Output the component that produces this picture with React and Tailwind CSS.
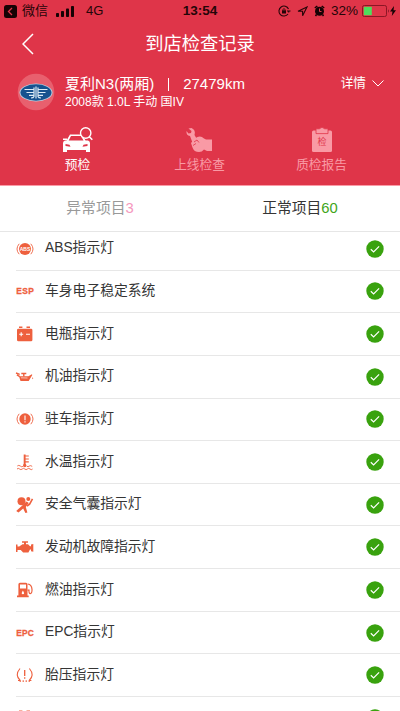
import React from 'react';

const CheckBadge = () => (
  <svg viewBox="0 0 18 18" className="h-[18px] w-[18px] shrink-0">
    <circle cx="9" cy="9" r="8.7" fill="#39a20e" />
    <path d="M4.8 9.2l2.8 2.7 5.5-5.6" fill="none" stroke="#fff" strokeWidth="1.2" />
  </svg>
);

const Glyph = ({ children }) => (
  <svg viewBox="0 0 18 18" className="h-[18px] w-[18px] shrink-0 overflow-visible" fill="#ee603e">
    {children}
  </svg>
);

const BrakeArcs = () => (
  <path
    d="M3.2 3.8Q-1.2 9 3.2 14.2M14.8 3.8Q19.2 9 14.8 14.2"
    fill="none"
    stroke="#ee603e"
    strokeWidth="0.9"
  />
);

const AbsIcon = () => (
  <Glyph>
    <BrakeArcs />
    <circle cx="9" cy="9" r="6" />
    <text x="9" y="10.9" textAnchor="middle" fontSize="5" fontWeight="700" fill="#fff">ABS</text>
  </Glyph>
);

const LetterIcon = ({ text }) => (
  <Glyph>
    <text x="9" y="12.2" textAnchor="middle" fontSize="8.4" fontWeight="700" textLength="17.6" stroke="#ee603e" strokeWidth="0.3">
      {text}
    </text>
  </Glyph>
);

const BatteryIcon = () => (
  <Glyph>
    <rect x="1" y="3.7" width="15.4" height="12.6" rx="1.4" />
    <path d="M3 1.5h3.4v1.4H3zM10.5 1.5H14v1.4h-3.500z" />
    <path d="M3.2 9.3h4M5.200 7.300v4M10 9.300h4" stroke="#fff" strokeWidth="1.1" />
  </Glyph>
);

const OilIcon = () => (
  <Glyph>
    <path d="M3 8.200h9.400l3.500-2 .4.9-3.600 5.800H4.500z" />
    <path d="M0 5l3.700 1.400M3.800 8.600L.9 6.800M5.300 5.500h5M7.800 5.500v3" fill="none" stroke="#ee603e" strokeWidth="1.400" />
    <path d="M16.700 9q1 1.700 0 2.200-1-.5 0-2.200z" />
    <path d="M5 9.800l6.500.2" stroke="#fff" strokeWidth=".6" />
  </Glyph>
);

const ParkingIcon = () => (
  <Glyph>
    <BrakeArcs />
    <circle cx="9" cy="9" r="5.700" />
    <path d="M9 5.500v4.800M9 11.200v1.300" stroke="#fff" strokeWidth="1.100" />
  </Glyph>
);

const WaterIcon = () => (
  <Glyph>
    <path d="M7.700 1.500h1.900v11H7.700zM9.500 2.400h3.300v1.100H9.500zM9.500 5.400h3.300v1.100H9.500zM9.500 8.300h3.300v1.100H9.500z" />
    <circle cx="8.700" cy="12.500" r="1.700" />
    <path
      d="M1.300 13q1.500-1.300 3 0t2.600.4M10.800 13.300q1.300.8 2.400-.2t3 .2M1 16q1.300-1.300 2.600 0t2.600 0 2.600 0 2.600 0 2.600 0 2.600 0"
      fill="none"
      stroke="#ee603e"
      strokeWidth=".9"
    />
  </Glyph>
);

const AirbagIcon = () => (
  <Glyph>
    <circle cx="5.500" cy="5.300" r="4" />
    <circle cx="12.300" cy="3" r="2" />
    <path d="M16.500 2.800l-2.900 5.300-2.600 2" fill="none" stroke="#ee603e" strokeWidth="1.600" />
    <path d="M10.500 5.500l2.300 1.600-3 4 1.600 5.400-2 .6-2.200-4.700-4.700 4.100-2.300-1.600 5.600-5z" />
  </Glyph>
);

const EngineIcon = () => (
  <Glyph>
    <path d="M6 3.300h6v1.400h-2v1.600h2l2 2h1V6.500l2.300-.4v7.600l-2.300-.4v-1.800h-1l-1.600 3H7.100l-2.300-2.600H1.500v2.200H0V6.600h1.500v2h1.700l3.300-2.300H8V4.700H6z" />
  </Glyph>
);

const FuelIcon = () => (
  <Glyph>
    <path
      fillRule="evenodd"
      d="M3.900 1.800H10q1.500 0 1.500 1.500v11.300h1.200v1.700H1v-1.700h1.400V3.300q0-1.500 1.500-1.500zM4 3.500v4h6v-4z"
    />
    <path d="M11.800 3q3.900.5 4.200 5.400.2 4-1.700 4.200-1.500 0-1.300-3.500H11.500" fill="none" stroke="#ee603e" strokeWidth="1.200" />
    <path d="M6.900 9.400q2.400 3.700 0 3.900-2.400-.2 0-3.900z" fill="#fff" />
  </Glyph>
);

const TireIcon = () => (
  <Glyph>
    <path
      d="M4 2.500Q-1.500 9 4.200 14.500V16M13.400 2.500Q18.900 9 13.200 14.500V16M4.200 14.500H2M13.200 14.500h2.200M7.200 14.200V16M10.200 14.200V16"
      fill="none"
      stroke="#ee603e"
      strokeWidth="1.100"
    />
    <path d="M8.700 4v6M8.700 11.300v1.500" stroke="#ee603e" strokeWidth="1.300" />
  </Glyph>
);

const items = [
  { name: 'ABS指示灯', icon: <AbsIcon /> },
  { name: '车身电子稳定系统', icon: <LetterIcon text="ESP" /> },
  { name: '电瓶指示灯', icon: <BatteryIcon /> },
  { name: '机油指示灯', icon: <OilIcon /> },
  { name: '驻车指示灯', icon: <ParkingIcon /> },
  { name: '水温指示灯', icon: <WaterIcon /> },
  { name: '安全气囊指示灯', icon: <AirbagIcon /> },
  { name: '发动机故障指示灯', icon: <EngineIcon /> },
  { name: '燃油指示灯', icon: <FuelIcon /> },
  { name: 'EPC指示灯', icon: <LetterIcon text="EPC" /> },
  { name: '胎压指示灯', icon: <TireIcon /> },
  { name: '', icon: <BatteryIcon /> },
];

const StatusBar = () => (
  <div className="grid h-[22px] grid-cols-[1fr_auto_1fr] items-center pr-[4px] pl-[4px] text-[13px] text-[#240508]">
    <div className="flex items-center">
      <svg viewBox="0 0 13 13" className="h-[13px] w-[13px]">
        <rect width="13" height="13" rx="2.500" fill="#160204" />
        <path d="M8 3L4.500 6.500 8 10" fill="none" stroke="#df3549" strokeWidth="1.300" />
      </svg>
      <span className="ml-[5px]">微信</span>
      <svg viewBox="0 0 18 11" className="ml-[8px] h-[11px] w-[18px]" fill="#160204">
        <rect x="0" y="7" width="3" height="4" rx=".8" />
        <rect x="5" y="5" width="3" height="6" rx=".8" />
        <rect x="10" y="2.500" width="3" height="8.500" rx=".8" />
        <rect x="15" y="0" width="3" height="11" rx=".8" />
      </svg>
      <span className="ml-[12px]">4G</span>
    </div>
    <span className="text-[13.500px] font-bold">13:54</span>
    <div className="flex items-center justify-end">
      <svg viewBox="0 0 13 12" className="h-[12px] w-[13px]" fill="none" stroke="#240508">
        <path d="M10.500 4A5 5 0 1 0 10 9M9 6h3.500M10.700 7.500V6" strokeWidth="1.100" />
        <rect x="4" y="5.300" width="4" height="3.200" fill="#240508" stroke="none" />
        <path d="M4.900 5.500v-1.100q1.100-1.500 2.200 0v1.100" strokeWidth=".8" />
      </svg>
      <svg viewBox="0 0 11 11" className="ml-[6px] h-[11px] w-[11px]" fill="none" stroke="#240508" strokeWidth="1.100">
        <path d="M10 1L1 5.200h4.600v4.600z" />
      </svg>
      <svg viewBox="0 0 11 12" className="ml-[6px] h-[12px] w-[11px]" fill="#160204">
        <circle cx="5.500" cy="6.300" r="4.500" />
        <path d="M.8 3L3.300 1M10.200 3L7.700 1M2.500 9.500l-1 1.500M8.500 9.500l1 1.500" stroke="#160204" strokeWidth="1.500" />
        <path d="M5.500 3.500v3h2" fill="none" stroke="#df3549" />
      </svg>
      <span className="ml-[6px] text-[13.500px]">32%</span>
      <svg viewBox="0 0 28 12" className="ml-[4px] h-[12px] w-[28px]">
        <rect x=".5" y=".5" width="24" height="11" rx="1.800" fill="none" stroke="#8b1625" />
        <rect x="1.800" y="1.800" width="8" height="8.400" fill="#4ede5c" />
        <path d="M26 4v4q1.600-2 0-4z" fill="#6b101c" />
      </svg>
      <svg viewBox="0 0 6 10" className="h-[10px] w-[6px]" fill="#160204">
        <path d="M4 0L0 5.600h2.500L1.800 10 6 4.200H3.500z" />
      </svg>
    </div>
  </div>
);

const BrandLogo = () => (
  <svg viewBox="0 0 38 38" className="h-[38px] w-[38px]">
    <circle cx="19" cy="19" r="18.300" fill="#e8606e" />
    <ellipse cx="19" cy="19.500" rx="16.500" ry="9" fill="#b9d0e0" />
    <ellipse cx="19" cy="19.500" rx="15.500" ry="8.200" fill="#16528f" />
    <path
      d="M19 13.500v12M17 14.500v9q-.5 1.500-3 1.500M21 14.500v9q.5 1.500 3 1.500M7.500 16.500H17M21 16.500h9.500M9.500 19.500H17M21 19.500h7.500M12 22.300h5M21 22.300h5"
      fill="none"
      stroke="#dcebf5"
      strokeWidth="1.200"
    />
  </svg>
);

const CarSearchIcon = () => (
  <svg viewBox="0 0 30 26" className="h-[26px] w-[30px]" fill="#fff">
    <path
      fillRule="evenodd"
      d="M7 7.500h12l3.500 6h2.500q2 .5 2 2.500v9h-4v-2H4v2H0V16q0-2 2-2.500h1.500zM8 9l-2.300 4.500h14.800L18 9zM2.500 17v2l5 .7-1-2zM24.500 17v2l-5 .7 1-2z"
    />
    <path d="M0 11.500h4v1.500H0z" />
    <circle cx="22.700" cy="6" r="5.200" fill="#df3549" stroke="#fff" strokeWidth="1.400" />
    <path d="M26.300 9.700l3 3" stroke="#fff" strokeWidth="1.600" />
  </svg>
);

const WrenchIcon = () => (
  <svg viewBox="0 0 27 26" className="h-[26px] w-[27px]" fill="#f99aa5">
    <path d="M2.500 1.500l3 2.500-.5 2-2.500.5L.5 4Q0 8.500 4 9l3 8 5-3-3.500-6Q10 3 5.500 1z" />
    <path d="M9 11.500q5-4 9 0l2 1h6V24h-5l-3-1.500q-2 2.500-5 2.500-5 0-6.500-4.500L5 16z" />
    <path d="M8 15l3-2 2 2.500M7 18.500l3-2" fill="none" stroke="#df3549" strokeWidth=".8" />
  </svg>
);

const ClipboardIcon = () => (
  <svg viewBox="0 0 20 25" className="h-[25px] w-[20px]">
    <rect x="0" y="3.500" width="20" height="21.500" rx="1.500" fill="#f99aa5" />
    <path d="M4 1.800h3.300q2.700-3 5.400 0H16v4.800H4z" fill="#f99aa5" stroke="#df3549" strokeWidth=".8" />
    <text x="10" y="18.200" textAnchor="middle" fontSize="9" fill="#df3549">检</text>
  </svg>
);

const steps = [
  { label: '预检', icon: <CarSearchIcon />, active: true },
  { label: '上线检查', icon: <WrenchIcon /> },
  { label: '质检报告', icon: <ClipboardIcon /> },
];

const Header = () => (
  <header className="h-[186px] border-b border-[#fb9ba7] bg-[#df3549] text-white">
    <StatusBar />
    <div className="grid h-[43px] grid-cols-[1fr_auto_1fr] items-center">
      <svg viewBox="0 0 12 22" className="ml-[22px] h-[22px] w-[12px]" fill="none" stroke="#fff" strokeWidth="1.500">
        <path d="M11 1L1 11l10 10" />
      </svg>
      <h1 className="text-[18.300px]">到店检查记录</h1>
    </div>
    <div className="flex h-[54px] items-center pr-[16px] pl-[17px]">
      <BrandLogo />
      <div className="ml-[10px] flex-1">
        <div className="flex items-center text-[15px] leading-[20px]">
          <span>夏利N3(两厢)</span>
          <span className="mx-[14px] h-[13px] w-px bg-white" />
          <span>27479km</span>
        </div>
        <div className="text-[12px] leading-[16px]">2008款 1.0L 手动 国IV</div>
      </div>
      <div className="mb-[17px] flex items-center">
        <span className="text-[12.700px]">详情</span>
        <svg viewBox="0 0 12 7" className="ml-[6px] h-[7px] w-[12px]" fill="none" stroke="#fff">
          <path d="M.5.5L6 6 11.500.5" />
        </svg>
      </div>
    </div>
    <div className="grid grid-cols-[122px_122px_122px] justify-center pt-[7px] pr-[1px]">
      {steps.map((step) => (
        <div
          key={step.label}
          className={step.active ? 'flex flex-col items-center' : 'flex flex-col items-center text-[#f99aa5]'}
        >
          <div className="flex h-[27px] items-center">{step.icon}</div>
          <span className="mt-[3px] text-[12.700px] leading-[18px]">{step.label}</span>
        </div>
      ))}
    </div>
  </header>
);

const App = () => (
  <div className="h-[711px] w-[400px] overflow-hidden bg-white font-['Liberation_Sans','Noto_Sans_CJK_SC',sans-serif] text-[#353535]">
    <Header />
    <div className="grid h-[46px] grid-cols-2 items-center border-b border-[#e6e6e6] text-[14.800px]">
      <div className="text-center text-[#999]">
        异常项目<span className="text-[#f598bd]">3</span>
      </div>
      <div className="text-center">
        正常项目<span className="text-[#3fa51b]">60</span>
      </div>
    </div>
    <ul className="-mt-[4px]">
      {items.map((item, index) => (
        <li
          key={index}
          className="ml-[16px] flex h-[42.650px] items-center border-b border-[#e7e7e7] pr-[16px]"
        >
          {item.icon}
          <span className="ml-[11px] flex-1 text-[13.800px]">{item.name}</span>
          <CheckBadge />
        </li>
      ))}
    </ul>
  </div>
);

export default App;
